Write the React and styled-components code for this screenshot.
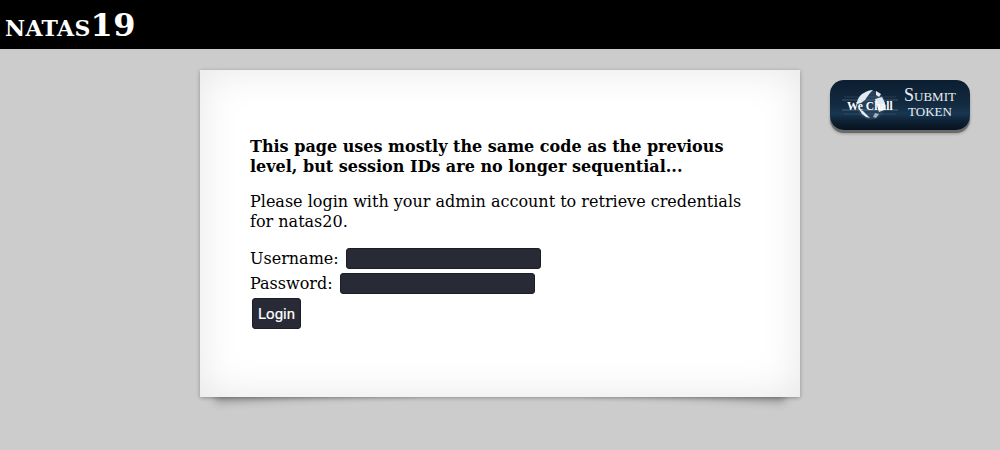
import styled, { createGlobalStyle } from 'styled-components';

const GlobalStyle = createGlobalStyle`
  html {
    height: 100%;
    background: #ccc;
  }
  body {
    margin: 0;
    padding: 0;
    min-height: 100%;
    color: #000;
    font-family: "DejaVu Serif", serif;
  }
`;

const Header = styled.header`
  height: 49px;
  background: #000;
  overflow: hidden;
`;

const Title = styled.h1`
  margin: 0;
  padding: 6px 0 0 5px;
  font-size: 32px;
  line-height: 38px;
  font-weight: 700;
  font-variant: small-caps;
  letter-spacing: 0.3px;
  color: #fff;
`;

const Main = styled.main`
  position: relative;
  z-index: 0;
  display: flex;
  justify-content: center;
  height: 401px;
  box-sizing: border-box;
  padding-top: 21px;
`;

const Card = styled.section`
  position: relative;
  width: 500px;
  height: 227px;
  padding: 50px;
  background: #fff;
  box-shadow: 0 1px 4px rgba(0, 0, 0, 0.3), inset 0 0 40px rgba(0, 0, 0, 0.1);

  &::before,
  &::after {
    content: '';
    position: absolute;
    z-index: -1;
    bottom: 8px;
    width: 200px;
    height: 20px;
    box-shadow: 0 8px 8px rgba(0, 0, 0, 0.28);
  }
  &::before {
    left: 14px;
    transform: rotate(-3deg);
  }
  &::after {
    right: 14px;
    transform: rotate(3deg);
  }
`;

const Lead = styled.h3`
  margin: 17px 0 15px;
  font-size: 16px;
  line-height: 20px;
  font-weight: 700;
`;

const Paragraph = styled.p`
  margin: 0 0 14px;
  font-size: 16px;
  line-height: 20px;
`;

const Form = styled.form`
  font-size: 16px;
  line-height: 25px;
`;

const Field = styled.div`
  display: flex;
  align-items: center;
  height: 25px;
`;

const Input = styled.input`
  box-sizing: border-box;
  width: 195px;
  height: 21px;
  margin-left: 7px;
  padding: 0 6px;
  border: 1px solid #1c1d25;
  border-radius: 3px;
  background: #282a36;
  color: #fff;
`;

const Button = styled.button`
  display: block;
  box-sizing: border-box;
  width: 49px;
  height: 31px;
  margin: 2px 0 0 2px;
  padding: 0;
  border: 1px solid #1c1d25;
  border-radius: 3px;
  background: #282a36;
  color: #fff;
  font-family: Roboto, sans-serif;
  font-size: 15px;
  font-weight: 400;
  -webkit-text-stroke: 0.2px #fff;
`;

const Badge = styled.a`
  position: absolute;
  top: 31px;
  left: 830px;
  display: flex;
  align-items: center;
  box-sizing: border-box;
  width: 140px;
  height: 50px;
  padding-left: 12px;
  border-radius: 14px;
  background: linear-gradient(#0c1e31 0%, #12293f 45%, #183650 68%, #0f2438 80%, #07121e 100%);
  box-shadow: 0 3px 0 #6a6a6a, 0 4px 3px rgba(0, 0, 0, 0.25);
  color: #e8eef2;
  text-decoration: none;
`;

const Globe = styled.div`
  position: relative;
  width: 56px;
  height: 36px;
  flex: none;
`;

const GlobeText = styled.span`
  position: absolute;
  left: 5px;
  top: 12px;
  font-family: "Liberation Serif", serif;
  font-size: 11.5px;
  line-height: 14px;
  font-weight: 700;
  white-space: nowrap;
  color: #fff;
`;

const BadgeLabel = styled.div`
  flex: 1;
  margin-top: -4px;
  padding-right: 8px;
  text-align: center;
  font-family: "Liberation Serif", serif;
  font-variant: small-caps;
`;

const BadgeLine = styled.div`
  font-size: 18px;
  line-height: 15px;
`;

export default function App() {
  return (
    <>
      <GlobalStyle />
      <Header>
        <Title>natas19</Title>
      </Header>
      <Main>
        <Card>
          <Lead>
            This page uses mostly the same code as the previous level, but session IDs are no longer
            sequential...
          </Lead>
          <Paragraph>Please login with your admin account to retrieve credentials for natas20.</Paragraph>
          <Form>
            <Field>
              Username:
              <Input name="username" />
            </Field>
            <Field>
              Password:
              <Input name="password" />
            </Field>
            <Button type="button">Login</Button>
          </Form>
        </Card>
        <Badge href="#">
          <Globe>
            <svg width="56" height="36" viewBox="0 0 56 36">
              <circle cx="29" cy="18" r="14.5" fill="#24405a" />
              <path
                d="M22 6c3-2 6-3 9-3l-3 3-3 4-2 3-4 3-4 1c0-5 3-9 7-11zM17 22l4 2 4 4 3 3-4-1-4-3zM34 4l5 3-2 3-3-2zM33 12l7-2 3 6-1 7-5 2-2-6z"
                fill="#e4ebf0"
              />
              <path d="M33 26l4 1-3 4-3-1z" fill="#9fb2c0" />
              <g stroke="#c9d6df" strokeWidth="1">
                <path d="M2 10h52" opacity="0.12" />
                <path d="M0 13h56" opacity="0.25" />
                <path d="M0 23h56" opacity="0.3" />
                <path d="M2 27h52" opacity="0.12" />
              </g>
            </svg>
            <GlobeText>We Chall</GlobeText>
          </Globe>
          <BadgeLabel>
            <BadgeLine>Submit</BadgeLine>
            <BadgeLine>token</BadgeLine>
          </BadgeLabel>
        </Badge>
      </Main>
    </>
  );
}
